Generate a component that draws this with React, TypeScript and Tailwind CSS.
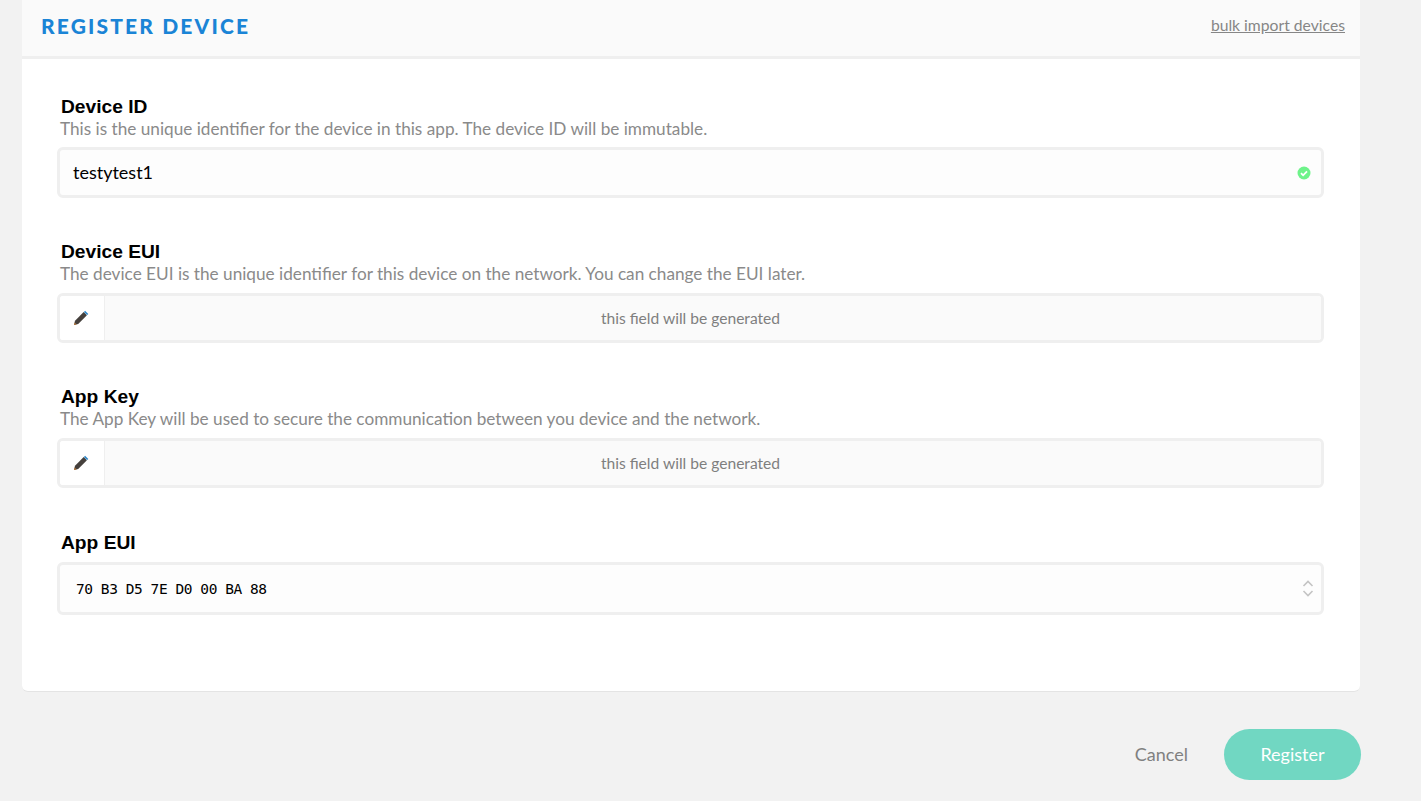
const lato = "font-['Lato','Noto_Sans',sans-serif]";

function Pencil() {
  return (
    <svg width="16" height="16" viewBox="0 0 16 16" aria-hidden="true" className="-ml-[2px]">
      <path d="M1 15l1-4.2L10.7 2.1l3.2 3.2L5.2 14z" fill="#45403c" />
      <path d="M10.9 1.9l1.2-1.2 3.2 3.2-1.2 1.2z" fill="#2c86c9" />
      <path d="M1 15l.6-2.6 2 2z" fill="#b5773a" />
    </svg>
  );
}

function Label({ title, hint }: { title: string; hint?: string }) {
  return (
    <div className="pl-[4px]">
      <div className="font-['Liberation_Sans',Arial,sans-serif] font-bold text-[19.2px] leading-[20px] text-black">{title}</div>
      {hint && <div className="text-[17.2px] leading-[23px] text-[#8a8a8a] -ml-px">{hint}</div>}
    </div>
  );
}

function GeneratedField() {
  return (
    <div className="mt-[8px] h-[50px] flex border-[3px] border-[#efefef] rounded-md overflow-hidden">
      <div className="w-[45px] shrink-0 bg-white border-r border-[#efefef] flex items-center justify-center">
        <Pencil />
      </div>
      <div className="flex-1 bg-[#fafafa] flex items-center justify-center pr-[45px] pt-[2px] text-[15.6px] text-[#7f7f7f]">
        this field will be generated
      </div>
    </div>
  );
}

export default function App() {
  return (
    <div className={`${lato} h-[801px] overflow-hidden bg-[#f2f2f2]`}>
      <div className="ml-[22px] w-[1338px] h-[692px] bg-white rounded-b-md border-b border-[#e4e4e4] flex flex-col">
        <header className="h-[59px] shrink-0 bg-[#fafafa] border-b-[3px] border-[#efefef] flex items-center justify-between pl-[19px] pr-[15px] pb-[5px]">
          <h1 className="font-['Lato',sans-serif] font-black text-[21px] tracking-[2.15px] text-[#1a84d6]">REGISTER DEVICE</h1>
          <a className="text-[15.7px] text-[#868686] underline">bulk import devices</a>
        </header>
        <main className="pl-[35px] pr-[36px] pt-[38px]">
          <Label title="Device ID" hint="This is the unique identifier for the device in this app. The device ID will be immutable." />
          <div className="mt-[7px] h-[51px] px-[13px] flex items-center justify-between border-[3px] border-[#efefef] rounded-md bg-[#fdfdfd]">
            <span className="text-[18px] text-black">testytest1</span>
            <svg width="14" height="14" viewBox="0 0 14 14" aria-hidden="true" className="-mr-[3px]">
              <circle cx="7" cy="7" r="6.5" fill="#6ef38a" />
              <path d="M4 7.2l2.1 2.1L10 5.3" fill="none" stroke="#fff" strokeWidth="1.8" />
            </svg>
          </div>

          <div className="mt-[44px]">
            <Label title="Device EUI" hint="The device EUI is the unique identifier for this device on the network. You can change the EUI later." />
            <GeneratedField />
          </div>

          <div className="mt-[44px]">
            <Label title="App Key" hint="The App Key will be used to secure the communication between you device and the network." />
            <GeneratedField />
          </div>

          <div className="mt-[45px]">
            <Label title="App EUI" />
            <div className="mt-[9px] h-[53px] pl-[16px] pr-[7px] flex items-center justify-between border-[3px] border-[#efefef] rounded-md bg-[#fdfdfd]">
              <span className="pt-[2px] font-['DejaVu_Sans_Mono',monospace] text-[14.5px] tracking-[-0.44px] text-black">70 B3 D5 7E D0 00 BA 88</span>
              <svg width="12" height="17" viewBox="0 0 12 17" fill="none" stroke="#c4c4c4" strokeWidth="1.6" aria-hidden="true">
                <path d="M1.5 6L6 1.5 10.5 6" />
                <path d="M1.5 11L6 15.5 10.5 11" />
              </svg>
            </div>
          </div>
        </main>
      </div>
      <footer className="mt-[37px] w-[1361px] flex justify-end items-center">
        <button className="text-[18px] text-[#808080] mr-[36px]">Cancel</button>
        <button className="w-[137px] h-[51px] rounded-full bg-[#71d7c2] text-white text-[18px]">Register</button>
      </footer>
    </div>
  );
}
